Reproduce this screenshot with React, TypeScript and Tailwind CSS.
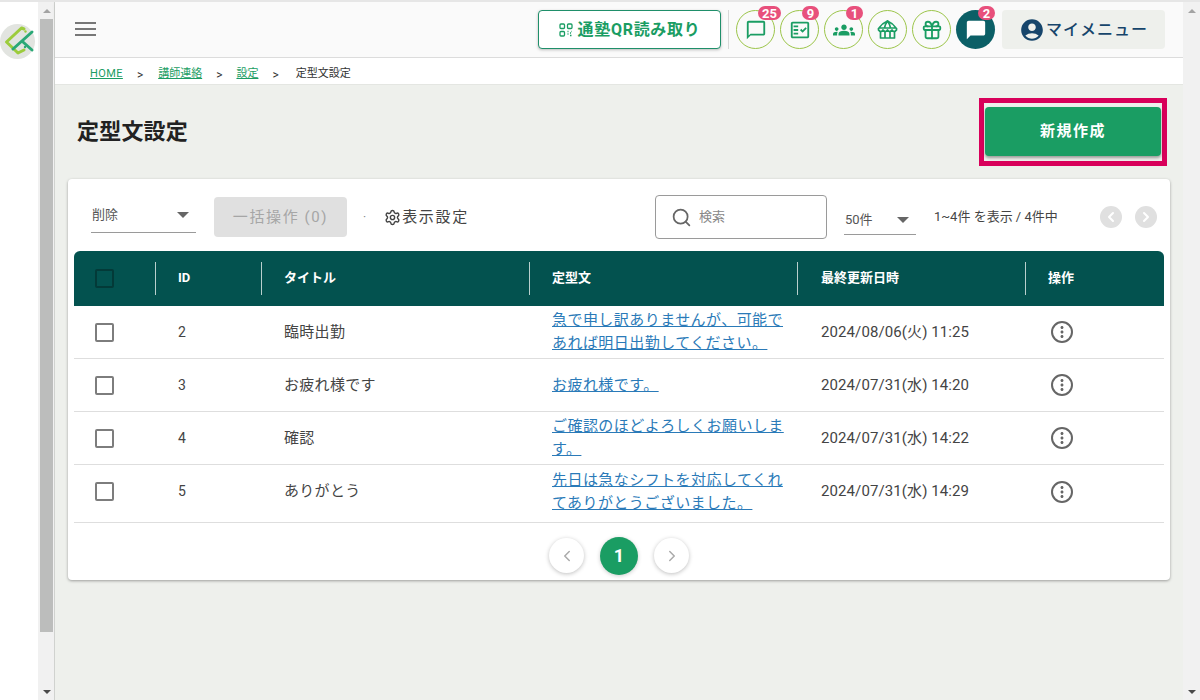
import { ChevronLeft, ChevronRight, Gift, Search, Settings } from "lucide-react";
import {
  MdAccountCircle,
  MdChatBubble,
  MdChatBubbleOutline,
  MdMoreVert,
  MdOutlineFactCheck,
  MdGroups,
} from "react-icons/md";
import type { ReactNode } from "react";

const font = "font-['Roboto','Noto_Sans_CJK_JP',sans-serif]";

const rows = [
  { id: 2, title: "臨時出勤", text: "急で申し訳ありませんが、可能であれば明日出勤してください。", date: "2024/08/06(火) 11:25", h: "h-[53px]" },
  { id: 3, title: "お疲れ様です", text: "お疲れ様です。", date: "2024/07/31(水) 14:20", h: "h-[53px]" },
  { id: 4, title: "確認", text: "ご確認のほどよろしくお願いします。", date: "2024/07/31(水) 14:22", h: "h-[53px]" },
  { id: 5, title: "ありがとう", text: "先日は急なシフトを対応してくれてありがとうございました。", date: "2024/07/31(水) 14:29", h: "h-[58px] pb-[4px]" },
];

function Badge({ label }: { label: string }) {
  return (
    <span className="absolute -top-[5px] left-[21px] flex h-[14px] min-w-[17px] items-center justify-center rounded-full bg-[#e8507c] px-[4px] text-[13px] font-bold leading-none text-white">
      {label}
    </span>
  );
}

function RoundIcon({ badge, children }: { badge?: string; children: ReactNode }) {
  return (
    <div className="relative flex h-[39px] w-[39px] items-center justify-center rounded-full border border-[#9cc54a] text-[#1a9d63]">
      {children}
      {badge && <Badge label={badge} />}
    </div>
  );
}

function ShopIcon() {
  return (
    <svg width="21" height="19" viewBox="0 0 21 19" fill="none" stroke="currentColor" strokeWidth="1.7" strokeLinejoin="round">
      <path d="M10.5 1 C7 2.5 4 5 2 8 H19 C17 5 14 2.5 10.5 1 Z" />
      <path d="M7.5 8 C8 5 9 3 10.5 1 C12 3 13 5 13.5 8" />
      <path d="M1.5 8 V10 C3 12 5 12 6 10 C7.5 12 9.5 12 10.5 10 C11.5 12 13.5 12 15 10 C16 12 18 12 19.5 10 V8" />
      <path d="M3.5 11.5 V18 H17.5 V11.5" />
      <path d="M8 12 V18 M13 12 V18" />
    </svg>
  );
}

function QrIcon() {
  return (
    <svg width="14" height="14" viewBox="0 0 14 14" fill="none" stroke="#1a9d63" strokeWidth="1.3">
      <rect x="1" y="1" width="4.5" height="4.5" rx="1" />
      <rect x="8.5" y="1" width="4.5" height="4.5" rx="1" />
      <rect x="1" y="8.5" width="4.5" height="4.5" rx="1" />
      <path d="M8.5 8.5h1M11 10h1M8.5 11h1M11 12.5h1.5M12.5 8.5h.5" />
    </svg>
  );
}

function Logo() {
  return (
    <svg width="36" height="36" viewBox="2 24 36 36" fill="none" strokeWidth="3" strokeLinecap="round" strokeLinejoin="round">
      <circle cx="19.5" cy="41.5" r="17.5" fill="#e2e4e0" stroke="none" />
      <path d="M26 29 L23.5 28 L8.5 42 L20 53 L26 50" stroke="#9ccc3c" />
      <path d="M15 49 L34 32" stroke="#2aa876" />
      <path d="M25 42 L34 50" stroke="#2aa876" />
      <circle cx="27.5" cy="31.5" r="1.2" fill="#9ccc3c" stroke="none" />
      <circle cx="27" cy="47" r="1.2" fill="#2aa876" stroke="none" />
    </svg>
  );
}

function ScrollBar({ thumb, className }: { thumb?: boolean; className: string }) {
  return (
    <div className={`flex h-full shrink-0 flex-col items-center bg-[#f1f1f1] ${className}`}>
      <div className="flex h-[17px] items-center justify-center">
        <div className="h-0 w-0 border-x-[4px] border-b-[4px] border-x-transparent border-b-[#a3a3a3]" />
      </div>
      {thumb && <div className="h-[613px] w-[13px] bg-[#bcbdbc]" />}
      <div className="flex-1" />
      <div className="flex h-[17px] items-center justify-center">
        <div className="h-0 w-0 border-x-[4px] border-t-[4px] border-x-transparent border-t-[#4a4a4a]" />
      </div>
    </div>
  );
}

function Select({ label, className }: { label: string; className: string }) {
  return (
    <div className={`flex items-center justify-between border-b border-[#9a9a9a] pl-px pr-[7px] ${className}`}>
      <span className="text-[13px] text-[#555]">{label}</span>
      <div className="h-0 w-0 border-x-[6px] border-t-[6px] border-x-transparent border-t-[#666]" />
    </div>
  );
}

function Checkbox({ dark }: { dark?: boolean }) {
  return (
    <div className={`h-[19px] w-[19px] rounded-[2px] border-2 ${dark ? "border-[#033a38]" : "border-[#7d7d7d]"}`} />
  );
}

function HeadCell({ children }: { children?: ReactNode }) {
  return (
    <div className="flex h-full items-center">
      <div className="h-[33px] w-px bg-[#b9cfcd]" />
      <div className="pb-[2px] pl-[22px] text-[13px] font-bold text-white">{children}</div>
    </div>
  );
}

export default function App() {
  return (
    <div className={`flex h-[700px] w-[1200px] overflow-hidden border-t-2 border-[#e6e6e6] bg-white ${font}`}>
      {/* left rail */}
      <div className="w-[38px] shrink-0 bg-white pt-[22px]">
        <Logo />
      </div>
      <div className="h-full w-[17px] shrink-0 border-r border-[#d0d2cf] bg-[#f1f1f1] pl-px">
        <ScrollBar thumb className="w-[15px]" />
      </div>

      <div className="flex min-w-0 flex-1 flex-col bg-[#eef0ec]">
        {/* header */}
        <header className="flex h-[56px] shrink-0 items-center border-b border-[#dcdcdc] bg-[#fafafa] pl-[20px] pr-[18px] shadow-[0_1px_3px_rgba(0,0,0,0.08)]">
          <div className="mb-[2px] flex w-[21px] flex-col gap-[4px]">
            <span className="h-[2px] bg-[#777]" />
            <span className="h-[2px] bg-[#777]" />
            <span className="h-[2px] bg-[#777]" />
          </div>
          <div className="ml-auto flex items-center">
            <button className="flex h-[39px] w-[183px] items-center justify-center gap-[5px] rounded-[4px] border border-[#1f8f6a] bg-white text-[16px] font-bold tracking-[0.7px] text-[#1a9d63] shadow-[0_1px_3px_rgba(0,0,0,0.25)]">
              <QrIcon />
              通塾QR読み取り
            </button>
            <div className="mx-[7px] h-[39px] w-px bg-[#d8d8d8]" />
            <div className="flex items-center gap-[5px]">
              <RoundIcon badge="25"><MdChatBubbleOutline size={22} /></RoundIcon>
              <RoundIcon badge="9"><MdOutlineFactCheck size={22} /></RoundIcon>
              <RoundIcon badge="1"><MdGroups size={22} /></RoundIcon>
              <RoundIcon><ShopIcon /></RoundIcon>
              <RoundIcon><Gift size={22} strokeWidth={2} /></RoundIcon>
              <div className="relative flex h-[39px] w-[39px] items-center justify-center rounded-full bg-[#0b5f66] text-white">
                <MdChatBubble size={22} />
                <span className="absolute -top-[4px] left-[22px] flex h-[14px] min-w-[17px] items-center justify-center rounded-full bg-[#e8507c] text-[13px] font-bold leading-none text-white">
                  2
                </span>
              </div>
            </div>
            <div className="ml-[7px] flex h-[39px] w-[163px] items-center justify-center rounded-[4px] bg-[#eef0ec] text-[16px] font-medium tracking-[1px] text-[#16456b]">
              <MdAccountCircle size={26} className="mr-px text-[#16456b]" />
              マイメニュー
            </div>
          </div>
        </header>

        {/* breadcrumb */}
        <nav className="flex h-[27px] shrink-0 items-center border-b border-[#e4e6e2] bg-white pl-[35px] pt-[7px] text-[11px] text-[#333]">
          <a className="tracking-[0.4px] text-[#1a9d63] underline">HOME</a>
          <span className="ml-[14px] mr-[15px] text-[12px]">&gt;</span>
          <a className="text-[#1a9d63] underline">講師連絡</a>
          <span className="mx-[14px] text-[12px]">&gt;</span>
          <a className="text-[#1a9d63] underline">設定</a>
          <span className="ml-[14px] mr-[17px] text-[12px]">&gt;</span>
          <span>定型文設定</span>
        </nav>

        {/* page */}
        <main className="flex flex-1 flex-col px-[13px]">
          <div className="flex h-[94px] items-center justify-between pl-[9px] pr-[3px]">
            <h1 className="mb-[2px] text-[22px] font-bold tracking-[0.2px] text-[#222]">定型文設定</h1>
            <div className="border-[5px] border-[#d8005a] px-px pb-[5px] pt-[4px]">
              <button className="h-[49px] w-[176px] rounded-[4px] bg-[#1a9d63] text-[15px] font-bold tracking-[1.5px] text-white shadow-[0_2px_3px_rgba(0,0,0,0.35)]">
                新規作成
              </button>
            </div>
          </div>

          <section className="flex h-[401px] flex-col rounded-[4px] bg-white px-[6px] shadow-[0_1px_3px_rgba(0,0,0,0.35)]">
            {/* toolbar */}
            <div className="flex h-[72px] items-center pt-[4px]">
              <Select label="削除" className="ml-[17px] -mt-[4px] h-[36px] w-[105px]" />
              <button className="ml-[18px] h-[40px] w-[133px] rounded-[4px] bg-[#e0e0e0] text-[15px] tracking-[1.6px] text-[#a6a6a6]">
                一括操作 (0)
              </button>
              <span className="ml-[16px] text-[12px] text-[#888]">·</span>
              <div className="ml-[18px] flex items-center gap-px text-[15px] tracking-[1.7px] text-[#444]">
                <Settings size={17} />
                表示設定
              </div>
              <div className="ml-[186px] flex h-[44px] w-[172px] items-center gap-[7px] rounded-[4px] border border-[#9a9a9a] pl-[15px] text-[13px] text-[#888]">
                <Search size={21} className="text-[#666]" />
                検索
              </div>
              <Select label="50件" className="ml-[17px] h-[36px] w-[72px] pt-[7px]" />
              <span className="ml-[18px] text-[13px] text-[#444]">1~4件 を表示 / 4件中</span>
              <div className="ml-[42px] flex gap-[13px]">
                <div className="flex h-[22px] w-[22px] items-center justify-center rounded-full bg-[#e0e0e0] text-white"><ChevronLeft size={16} strokeWidth={3} /></div>
                <div className="flex h-[22px] w-[22px] items-center justify-center rounded-full bg-[#e0e0e0] text-white"><ChevronRight size={16} strokeWidth={3} /></div>
              </div>
            </div>

            {/* table */}
            <div className="grid h-[55px] grid-cols-[81px_106px_268px_268px_228px_139px] rounded-t-[6px] bg-[#03524f]">
              <div className="flex items-center pl-[21px]"><Checkbox dark /></div>
              <HeadCell>ID</HeadCell>
              <HeadCell>タイトル</HeadCell>
              <HeadCell>定型文</HeadCell>
              <HeadCell><span className="ml-px">最終更新日時</span></HeadCell>
              <HeadCell>操作</HeadCell>
            </div>
            {rows.map((r) => (
              <div key={r.id} className={`grid grid-cols-[81px_106px_268px_268px_228px_139px] items-center border-b border-[#dedede] text-[15px] text-[#444] ${r.h}`}>
                <div className="pl-[21px]"><Checkbox /></div>
                <div className="pl-[23px] text-[14px]">{r.id}</div>
                <div className="pl-[23px] tracking-[0.3px]">{r.title}</div>
                <div className="pl-[23px] pr-[10px] leading-[23px] tracking-[0.45px]">
                  <a className="text-[#2a7ab8] underline">{r.text}</a>
                </div>
                <div className="pl-[24px] tracking-[0.1px]">{r.date}</div>
                <div className="pl-[26px]">
                  <div className="flex h-[22px] w-[22px] items-center justify-center rounded-full border-2 border-[#666] text-[#666]">
                    <MdMoreVert size={18} />
                  </div>
                </div>
              </div>
            ))}

            {/* pagination */}
            <div className="flex flex-1 items-center justify-center gap-[16px] pt-[8px]">
              <div className="flex h-[35px] w-[35px] items-center justify-center rounded-full bg-white text-[#aaa] shadow-[0_1px_4px_rgba(0,0,0,0.25)]"><ChevronLeft size={18} /></div>
              <div className="flex h-[38px] w-[38px] items-center justify-center rounded-full bg-[#1a9d63] text-[18px] font-bold text-white shadow-[0_1px_4px_rgba(0,0,0,0.2)]">1</div>
              <div className="flex h-[35px] w-[35px] items-center justify-center rounded-full bg-white text-[#aaa] shadow-[0_1px_4px_rgba(0,0,0,0.25)]"><ChevronRight size={18} /></div>
            </div>
          </section>
        </main>
      </div>
      <ScrollBar className="w-[17px]" />
    </div>
  );
}
